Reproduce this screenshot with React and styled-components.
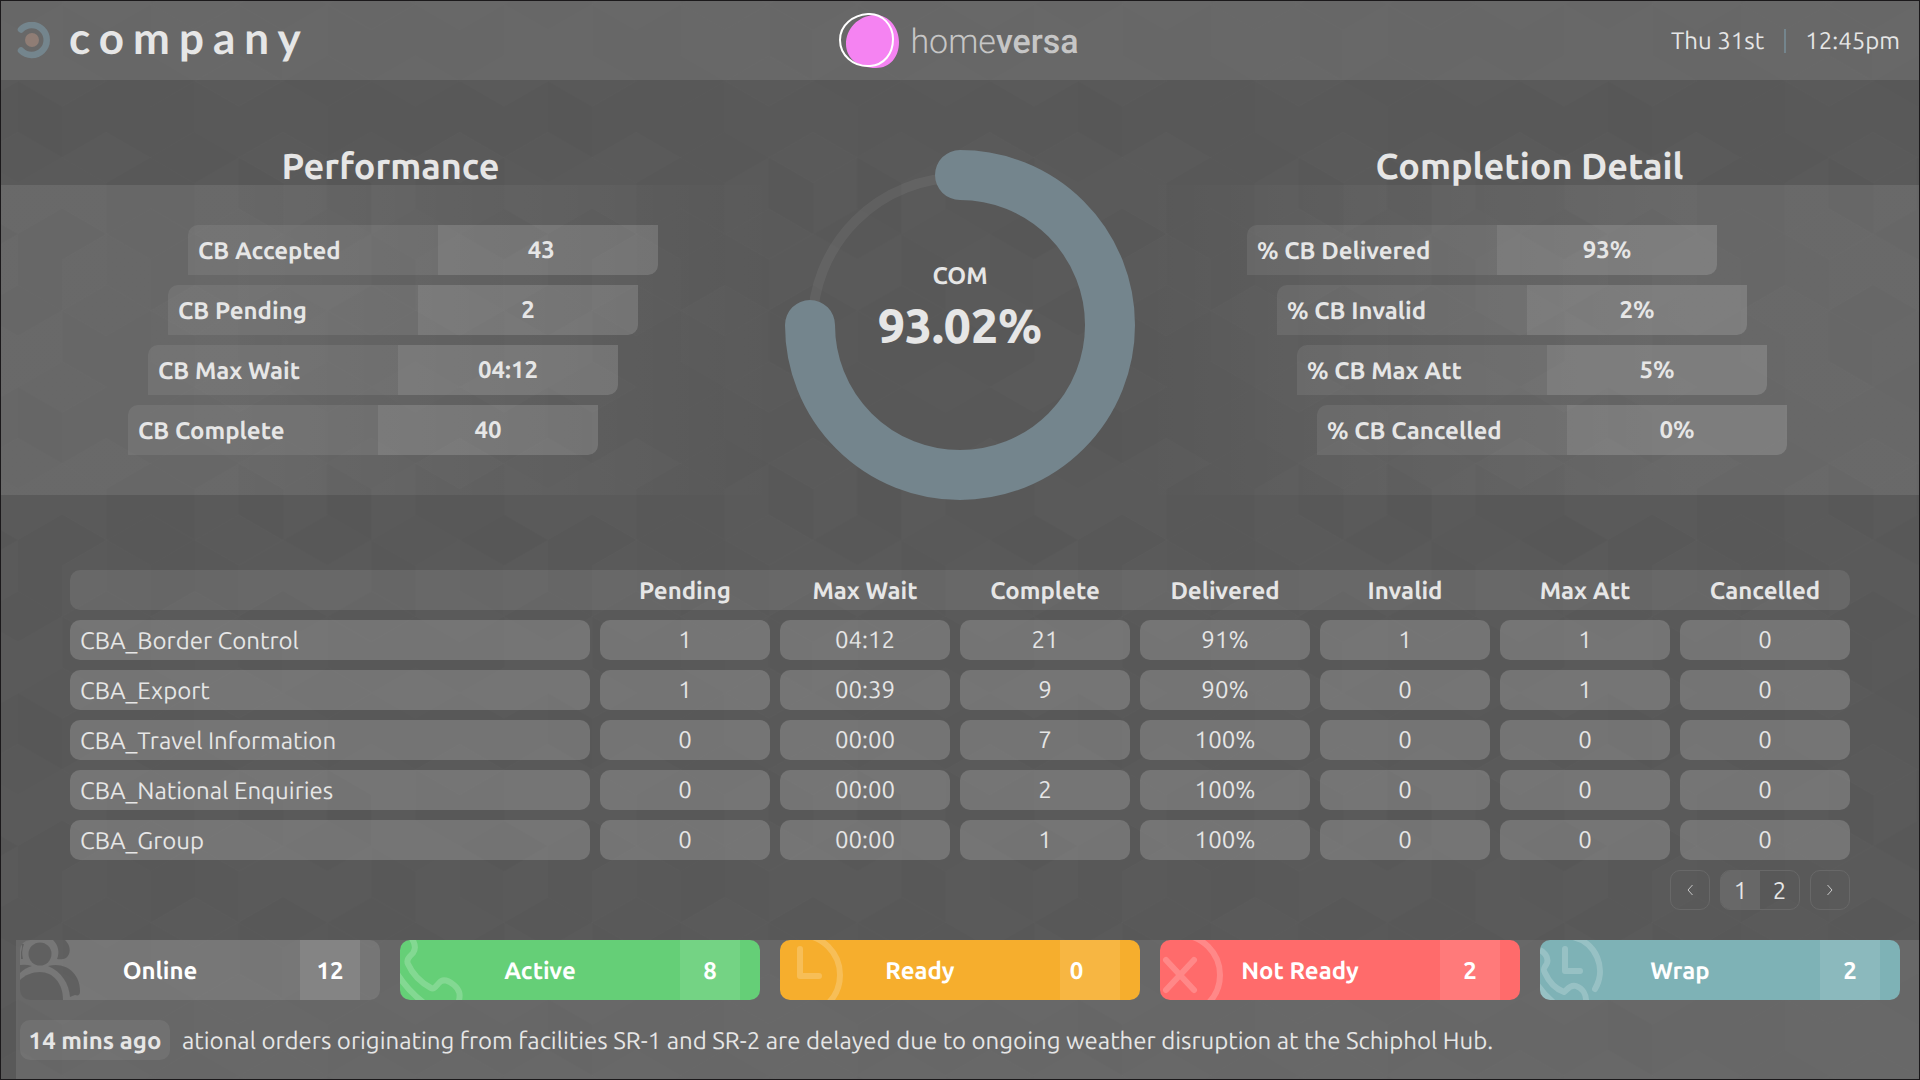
import React from "react";
import styled, { createGlobalStyle } from "styled-components";

const GlobalStyle = createGlobalStyle`
  *, *::before, *::after { box-sizing: border-box; }
  body {
    margin: 0;
    background: #575757;
    color: #e6e6e6;
    font-family: Ubuntu, "Noto Sans", "Open Sans", sans-serif;
    font-size: 24px;
    line-height: 30px;
    text-rendering: geometricPrecision;
  }
  button { font: inherit; color: inherit; }
`;

const Screen = styled.div`
  position: relative;
  display: flex;
  flex-direction: column;
  min-height: 100vh;
  border: 1px solid #1b191b;
  overflow: hidden;
  isolation: isolate;
`;

const Backdrop = styled.svg`
  position: absolute;
  inset: 0;
  z-index: -1;
  width: 100%;
  height: 100%;
`;

const Header = styled.header`
  display: grid;
  grid-template-columns: 1fr auto 1fr;
  align-items: center;
  height: 79px;
  padding: 0 19px 0 16px;
  background: rgba(255, 255, 255, 0.09);
`;

const Brand = styled.div`
  display: flex;
  align-items: center;
  gap: 18px;
`;

const BrandName = styled.span`
  padding-bottom: 6px;
  font-family: Lato, sans-serif;
  font-size: 44px;
  font-weight: 700;
  line-height: 48px;
  letter-spacing: 9px;
`;

const Product = styled.div`
  display: flex;
  align-items: center;
  gap: 10px;
`;

const ProductName = styled.span`
  padding-top: 2px;
  color: #c6c6c6;
  font-family: Roboto, sans-serif;
  font-size: 34px;
  font-weight: 300;
  line-height: 40px;

  b { font-weight: 500; }
`;

const Clock = styled.div`
  display: flex;
  justify-content: flex-end;
  gap: 20px;
  line-height: 24px;

  time + time {
    padding-left: 19px;
    border-left: 2px solid #74858d;
  }
`;

const Hero = styled.section`
  display: grid;
  grid-template-columns: 1fr 360px 1fr;
  margin-top: 70px;
`;

const Panel = styled.div`
  display: flex;
  flex-direction: column;
`;

const PanelTitle = styled.h2`
  margin: 0;
  padding-bottom: 3px;
  font-size: 36px;
  font-weight: 700;
  line-height: 32px;
  text-align: center;
`;

const Band = styled.dl`
  display: flex;
  flex-direction: column;
  gap: 10px;
  margin: 0;
  padding: 40px 0;
  background: linear-gradient(
    ${(p) => (p.$fade === "right" ? "to right" : "to left")},
    rgba(255, 255, 255, 0.09) 30%,
    rgba(255, 255, 255, 0)
  );
`;

const Metric = styled.div`
  display: grid;
  grid-template-columns: 250px 220px;
  align-self: flex-start;
  height: 50px;
  margin-left: ${(p) => p.$indent}px;
  border-radius: 10px 0;
  overflow: hidden;
  background: rgba(255, 255, 255, 0.08);
  font-weight: 700;
  line-height: 50px;

  dt {
    padding-left: 10px;
    line-height: 52px;
  }
  dd {
    margin: 0;
    background: rgba(255, 255, 255, 0.08);
    text-align: center;
  }
`;

const Gauge = styled.div`
  display: grid;
  place-items: center;

  > * { grid-area: 1 / 1; }
`;

const GaugeText = styled.div`
  display: flex;
  flex-direction: column;
  align-items: center;
  gap: 5px;
  padding-bottom: 33px;
  font-weight: 700;

  strong {
    font-size: 48px;
    line-height: 60px;
  }
`;

const Data = styled.section`
  display: flex;
  flex-direction: column;
  gap: 10px;
  margin: 70px 69px 0;
`;

const Table = styled.table`
  display: block;

  thead, tbody { display: grid; gap: 10px; }
  thead { margin-bottom: 10px; }
  tr {
    display: grid;
    grid-template-columns: 520fr repeat(7, 170fr);
    gap: 10px;
  }
  thead tr {
    border-radius: 10px;
    background: rgba(255, 255, 255, 0.085);
  }
  th, td {
    height: 40px;
    padding: 0;
    line-height: 40px;
    text-align: center;
  }
  th {
    font-weight: 700;
    line-height: 42px;
  }
  tbody th, tbody td {
    border-radius: 10px;
    background: rgba(255, 255, 255, 0.17);
    font-weight: 400;
  }
  tbody th {
    padding-left: 10px;
    text-align: left;
  }
`;

const Pager = styled.nav`
  display: flex;
  justify-content: flex-end;
  gap: 10px;
`;

const PageGroup = styled.div`
  display: flex;
  border: 1px solid #686868;
  border-radius: 10px;
  overflow: hidden;
`;

const PageButton = styled.button`
  width: 39px;
  height: 38px;
  padding: 2px 0 0;
  border: 0;
  background: ${(p) => (p.$current ? "rgba(255, 255, 255, 0.09)" : "none")};
`;

const StepButton = styled.button`
  display: grid;
  place-items: center;
  width: 40px;
  height: 40px;
  padding: 0;
  border: 1px solid #686868;
  border-radius: 10px;
  background: none;
`;

const Footer = styled.footer`
  display: flex;
  flex: 1;
  flex-direction: column;
  gap: 20px;
  margin: 30px 0 0 15px;
  padding: 0 19px 19px 4px;
  background: rgba(255, 255, 255, 0.09);
`;

const Statuses = styled.ul`
  display: grid;
  grid-template-columns: repeat(5, 1fr);
  gap: 20px;
  margin: 0;
  padding: 0;
  list-style: none;
`;

const Status = styled.li`
  position: relative;
  display: grid;
  grid-template-columns: 1fr 60px;
  height: 60px;
  padding-right: 20px;
  border-radius: 10px;
  overflow: hidden;
  background: ${(p) => p.$color};
  color: #fff;
  font-weight: 700;
  line-height: 62px;
  text-align: center;

  span + span { background: rgba(255, 255, 255, 0.1); }
`;

const StatusIcon = styled.svg`
  position: absolute;
  top: 0;
  left: 0;
  width: 80px;
  height: 60px;
`;

const News = styled.div`
  display: flex;
  height: 40px;
  gap: 12px;
  line-height: 42px;
`;

const Age = styled.time`
  flex: none;
  width: 150px;
  border-radius: 10px;
  background: rgba(255, 255, 255, 0.07);
  font-weight: 700;
  text-align: center;
`;

const Headline = styled.p`
  margin: 0;
  overflow: hidden;
  white-space: nowrap;
`;

/* Isometric cubes: each hexagon is split into three faint faces. */
const HALF = 44.17;
const SIDE = 51;
const shade = (n) => {
  const v = Math.sin(n * 12.9898 + 4.1) * 43758.5453;
  return Math.round((v - Math.floor(v)) * 5) * 0.004;
};
const cubes = [];
for (let r = -1; r <= 4; r++) {
  for (let c = -1; c <= 6; c++) {
    const row = (r + 4) % 4;
    const cx = c * 2 * HALF + (row % 2 ? HALF : 0);
    const cy = r * 1.5 * SIDE;
    const id = row * 6 + ((c + 6) % 6);
    const h = SIDE / 2;
    cubes.push(
      [`${cx},${cy} ${cx - HALF},${cy - h} ${cx},${cy - SIDE} ${cx + HALF},${cy - h}`, shade(id * 3 + 1)],
      [`${cx},${cy} ${cx - HALF},${cy - h} ${cx - HALF},${cy + h} ${cx},${cy + SIDE}`, shade(id * 3 + 2)],
      [`${cx},${cy} ${cx + HALF},${cy - h} ${cx + HALF},${cy + h} ${cx},${cy + SIDE}`, shade(id * 3 + 3)]
    );
  }
}

const CubeBackdrop = () => (
  <Backdrop aria-hidden="true">
    <defs>
      <pattern id="cubes" patternUnits="userSpaceOnUse" x="17" y="29" width={HALF * 12} height={SIDE * 6}>
        {cubes.map(([points, opacity], i) => (
          <polygon key={i} points={points} fill="#fff" fillOpacity={opacity} />
        ))}
      </pattern>
    </defs>
    <rect width="100%" height="100%" fill="url(#cubes)" />
  </Backdrop>
);

const light = { fill: "none", stroke: "#fff", strokeOpacity: 0.2, strokeWidth: 6, strokeLinecap: "round", strokeLinejoin: "round" };

const icons = {
  people: (
    <g fill="#000" fillOpacity="0.19">
      <circle cx="20" cy="14" r="11.5" />
      <path d="M0 40C5 35 12 32 20 32C33 32 43 43 43 60H0Z" />
      <path d="M33 0H45C49 4 51 9 49 14C47 19 42 20 37 19C40 12 38 5 33 0Z" />
      <path d="M28 26C46 21 60 34 60 50V52C60 55 58 56 55 55L50 57C49 44 42 32 28 26Z" />
      <path d="M1 4Q3 5 1 12V19H3Q1 12 4 4Z" />
      <path d="M0 25Q6 24 12 26Q5 28 0 33Z" />
    </g>
  ),
  phone: (
    <g {...light}>
      <path d="M11 -3C15 3 16 9 13 13C9 17 6 20 8 24C12 33 20 42 31 48C34 50 36 46 39 43C43 38 49 41 54 45C60 50 61 55 58 64" />
      <path d="M-4 32Q7 50 24 63" />
    </g>
  ),
  clock: (
    <g {...light}>
      <circle cx="20" cy="35" r="40" />
      <path d="M20 9V36H39" />
    </g>
  ),
  cross: (
    <g {...light}>
      <circle cx="20" cy="35" r="40" />
      <path d="M6 20L34 50M34 20L6 50" />
    </g>
  ),
  callback: (
    <g {...light}>
      <path d="M33 -3A35 35 0 0 1 55 49" />
      <path d="M25 9V31H40" />
      <path d="M-3 9C4 11 9 17 7 23C5 28 2 28 5 33C9 42 16 49 24 52C27 50 30 44 36 46C42 48 47 54 46 64" />
      <path d="M-4 43Q3 54 14 63" />
    </g>
  ),
};

const performance = [
  ["CB Accepted", "43\u2007", 187],
  ["CB Pending", "2", 167],
  ["CB Max Wait", "04:12", 147],
  ["CB Complete", "40", 127],
];
const completion = [
  ["% CB Delivered", "93%", 107],
  ["% CB Invalid", "2%", 137],
  ["% CB Max Att", "5%", 157],
  ["% CB Cancelled", "0%", 177],
];
const columns = ["Pending", "Max Wait", "Complete", "Delivered", "Invalid", "Max Att", "Cancelled"];
const rows = [
  ["CBA_Border Control", "1", "04:12", "21", "91%", "1", "1", "0"],
  ["CBA_Export", "1", "00:39", "9", "90%", "0", "1", "0"],
  ["CBA_Travel Information", "0", "00:00", "7", "100%", "0", "0", "0"],
  ["CBA_National Enquiries", "0", "00:00", "2", "100%", "0", "0", "0"],
  ["CBA_Group", "0", "00:00", "1", "100%", "0", "0", "0"],
];
const statuses = [
  ["Online", "12", "rgba(255, 255, 255, 0.1)", "people"],
  ["Active", "8", "#65cf77", "phone"],
  ["Ready", "0\u2007\u2007", "#f6ae2d", "clock"],
  ["Not Ready", "2", "#ff6b6b", "cross"],
  ["Wrap", "2", "#7eb2b6", "callback"],
];

const MetricPanel = ({ title, items, fade }) => (
  <Panel>
    <PanelTitle>{title}</PanelTitle>
    <Band $fade={fade}>
      {items.map(([label, value, indent]) => (
        <Metric key={label} $indent={indent}>
          <dt>{label}</dt>
          <dd>{value}</dd>
        </Metric>
      ))}
    </Band>
  </Panel>
);

export default function App() {
  return (
    <>
      <GlobalStyle />
      <Screen>
        <CubeBackdrop />
        <Header>
          <Brand>
            <svg width="34" height="38" viewBox="0 0 34 38" aria-hidden="true">
              <path d="M4 7.500A15 15 0 1 1 4 28.500" fill="none" stroke="#74858d" strokeWidth="6.500" strokeLinecap="round" />
              <circle cx="15" cy="18" r="7" fill="#8f7d75" />
            </svg>
            <BrandName>company</BrandName>
          </Brand>
          <Product>
            <svg width="62" height="60" viewBox="0 1 62 60" aria-hidden="true">
              <path d="M36 5C50 4 61 17 61 32C61 47 52 58 38 58C21 58 8 49 8 34C8 19 20 6 36 5Z" fill="#f583f2" />
              <path d="M30 4C44 3 55 15 55 29C55 44 46 55 32 56C15 57 2 45 2 30C2 15 15 5 30 4Z" fill="none" stroke="#fff" strokeWidth="2" />
            </svg>
            <ProductName>home<b>versa</b></ProductName>
          </Product>
          <Clock>
            <time>Thu 31st</time>
            <time>12:45pm</time>
          </Clock>
        </Header>

        <main>
          <Hero>
            <MetricPanel title="Performance" items={performance} fade="right" />
            <Gauge>
              <svg width="350" height="350" viewBox="0 0 350 350" aria-hidden="true">
                <circle cx="175" cy="175" r="147.500" fill="none" stroke="#fff" strokeOpacity="0.06" strokeWidth="10" />
                <path d="M175 25A150 150 0 1 1 25 175" fill="none" stroke="#74858d" strokeWidth="50" strokeLinecap="round" />
              </svg>
              <GaugeText>
                <span>COM</span>
                <strong>93.02%</strong>
              </GaugeText>
            </Gauge>
            <MetricPanel title="Completion Detail" items={completion} fade="left" />
          </Hero>

          <Data>
            <Table>
              <thead>
                <tr>
                  <td />
                  {columns.map((name) => <th key={name} scope="col">{name}</th>)}
                </tr>
              </thead>
              <tbody>
                {rows.map(([name, ...values]) => (
                  <tr key={name}>
                    <th scope="row">{name}</th>
                    {values.map((value, i) => <td key={columns[i]}>{value}</td>)}
                  </tr>
                ))}
              </tbody>
            </Table>
            <Pager aria-label="Pages">
              <StepButton type="button" aria-label="Previous page">
                <svg width="8" height="12" viewBox="0 0 8 12"><path d="M6.500 1L2 6L6.500 11" fill="none" stroke="#c8c8c8" /></svg>
              </StepButton>
              <PageGroup>
                <PageButton type="button" $current aria-current="page">1</PageButton>
                <PageButton type="button">2</PageButton>
              </PageGroup>
              <StepButton type="button" aria-label="Next page">
                <svg width="8" height="12" viewBox="0 0 8 12"><path d="M1.500 1L6 6L1.500 11" fill="none" stroke="#c8c8c8" /></svg>
              </StepButton>
            </Pager>
          </Data>
        </main>

        <Footer>
          <Statuses>
            {statuses.map(([label, count, color, icon]) => (
              <Status key={label} $color={color}>
                <StatusIcon viewBox="0 0 80 60" aria-hidden="true">{icons[icon]}</StatusIcon>
                <span>{label}</span>
                <span>{count}</span>
              </Status>
            ))}
          </Statuses>
          <News>
            <Age>14 mins ago</Age>
            <Headline>
              ational orders originating from facilities SR-1 and SR-2 are delayed due to ongoing weather disruption at the Schiphol Hub.
            </Headline>
          </News>
        </Footer>
      </Screen>
    </>
  );
}
